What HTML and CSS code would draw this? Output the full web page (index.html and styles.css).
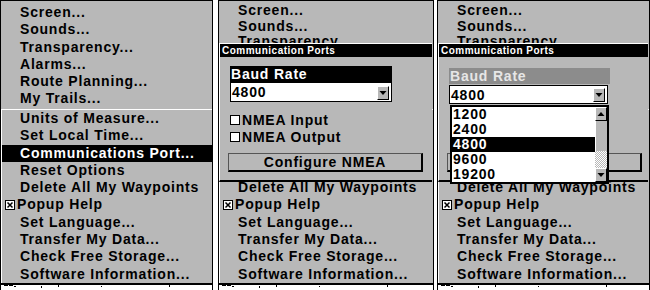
FILE: index.html
```html
<!DOCTYPE html>
<html lang="en">
<head>
    <meta charset="UTF-8">
    <meta name="viewport" content="width=device-width, initial-scale=1.0">
    <title>Communication Ports</title>
    <link rel="stylesheet" href="styles.css">
</head>
<body>
    <div class="screens">
        <!-- Screen 1: system menu, Communications Port selected -->
        <div class="screen screen-first">
            <div class="lcd">
                <ul class="menu menu-main">
                    <li>Screen...</li>
                    <li>Sounds...</li>
                    <li>Transparency...</li>
                    <li>Alarms...</li>
                    <li>Route Planning...</li>
                    <li>My Trails...</li>
                </ul>
                <ul class="menu menu-sub">
                    <li>Units of Measure...</li>
                    <li>Set Local Time...</li>
                    <li class="selected">Communications Port...</li>
                    <li>Reset Options</li>
                    <li>Delete All My Waypoints</li>
                    <li class="checkable"><svg class="check" width="10" height="10" viewBox="0 0 10 10"><rect x="0.5" y="0.5" width="9" height="9" fill="#fff" stroke="#000"/><path d="M2.5 2.5 L7.5 7.5 M7.5 2.5 L2.5 7.5" stroke="#000" stroke-width="1.5"/></svg>Popup Help</li>
                    <li>Set Language...</li>
                    <li>Transfer My Data...</li>
                    <li>Check Free Storage...</li>
                    <li>Software Information...</li>
                </ul>
            </div>
            <div class="map-strip">
                <svg width="100%" height="5"><g fill="#000"><rect x="3" y="0" width="4" height="1"/><rect x="8" y="0" width="4" height="1"/><rect x="13" y="1" width="2" height="1"/><rect x="40" y="1" width="1" height="2"/><rect x="57" y="0" width="1" height="2"/><rect x="100" y="1" width="1" height="1"/><rect x="168" y="0" width="1" height="2"/></g></svg>
            </div>
        </div>

        <!-- Screen 2: Communication Ports dialog -->
        <div class="screen screen-second screen-dialog">
            <div class="lcd">
                <ul class="menu menu-main">
                    <li>Screen...</li>
                    <li>Sounds...</li>
                    <li>Transparency...</li>
                </ul>
                <ul class="menu menu-sub">
                    <li class="covered">Units of Measure...</li>
                    <li class="covered">Set Local Time...</li>
                    <li class="covered">Communications Port...</li>
                    <li class="covered">Reset Options</li>
                    <li>Delete All My Waypoints</li>
                    <li class="checkable"><svg class="check" width="10" height="10" viewBox="0 0 10 10"><rect x="0.5" y="0.5" width="9" height="9" fill="#fff" stroke="#000"/><path d="M2.5 2.5 L7.5 7.5 M7.5 2.5 L2.5 7.5" stroke="#000" stroke-width="1.5"/></svg>Popup Help</li>
                    <li>Set Language...</li>
                    <li>Transfer My Data...</li>
                    <li>Check Free Storage...</li>
                    <li>Software Information...</li>
                </ul>

                <div class="dialog">
                    <div class="dialog-title">Communication Ports</div>
                    <div class="dialog-body">
                        <div class="field-label">Baud Rate</div>
                        <div class="select">
                            <span class="select-value">4800</span>
                            <span class="arrow-btn"><svg width="10" height="11" viewBox="0 0 10 11"><polygon points="1.5,4 8.5,4 5,8" fill="#000"/></svg></span>
                        </div>
                        <div class="options">
                            <div class="option"><span class="box"></span>NMEA Input</div>
                            <div class="option"><span class="box"></span>NMEA Output</div>
                        </div>
                        <button class="action" type="button"><span class="action-label">Configure NMEA</span></button>
                    </div>
                </div>
            </div>
            <div class="map-strip">
                <svg width="100%" height="5"><g fill="#000"><rect x="3" y="0" width="4" height="1"/><rect x="8" y="0" width="4" height="1"/><rect x="13" y="1" width="2" height="1"/><rect x="40" y="1" width="1" height="2"/><rect x="57" y="0" width="1" height="2"/><rect x="100" y="1" width="1" height="1"/><rect x="168" y="0" width="1" height="2"/></g></svg>
            </div>
        </div>

        <!-- Screen 3: Baud Rate list opened -->
        <div class="screen screen-third screen-dialog">
            <div class="lcd">
                <ul class="menu menu-main">
                    <li>Screen...</li>
                    <li>Sounds...</li>
                    <li>Transparency...</li>
                </ul>
                <ul class="menu menu-sub">
                    <li class="covered">Units of Measure...</li>
                    <li class="covered">Set Local Time...</li>
                    <li class="covered">Communications Port...</li>
                    <li class="covered">Reset Options</li>
                    <li>Delete All My Waypoints</li>
                    <li class="checkable"><svg class="check" width="10" height="10" viewBox="0 0 10 10"><rect x="0.5" y="0.5" width="9" height="9" fill="#fff" stroke="#000"/><path d="M2.5 2.5 L7.5 7.5 M7.5 2.5 L2.5 7.5" stroke="#000" stroke-width="1.5"/></svg>Popup Help</li>
                    <li>Set Language...</li>
                    <li>Transfer My Data...</li>
                    <li>Check Free Storage...</li>
                    <li>Software Information...</li>
                </ul>

                <div class="dialog">
                    <div class="dialog-title">Communication Ports</div>
                    <div class="dialog-body">
                        <div class="field-label field-label-open">Baud Rate</div>
                        <div class="select select-open">
                            <span class="select-value">4800</span>
                            <span class="arrow-btn"><svg width="10" height="11" viewBox="0 0 10 11"><polygon points="1.5,4 8.5,4 5,8" fill="#000"/></svg></span>
                            <div class="select-list">
                                <ul class="list-items">
                                    <li>1200</li>
                                    <li>2400</li>
                                    <li class="selected">4800</li>
                                    <li>9600</li>
                                    <li>19200</li>
                                </ul>
                                <div class="scrollbar">
                                    <span class="scroll-btn"><svg width="10" height="12" viewBox="0 0 10 12"><polygon points="1.5,8 8.5,8 5,4" fill="#000"/></svg></span>
                                    <span class="scroll-thumb"></span>
                                    <span class="scroll-track"></span>
                                    <span class="scroll-btn"><svg width="10" height="12" viewBox="0 0 10 12"><polygon points="1.5,4 8.5,4 5,8" fill="#000"/></svg></span>
                                </div>
                            </div>
                        </div>
                        <div class="options options-open covered">
                            <div class="option"><span class="box"></span>NMEA Input</div>
                            <div class="option"><span class="box"></span>NMEA Output</div>
                        </div>
                        <button class="action" type="button"><span class="action-label covered">Configure NMEA</span></button>
                    </div>
                </div>
            </div>
            <div class="map-strip">
                <svg width="100%" height="5"><g fill="#000"><rect x="3" y="0" width="4" height="1"/><rect x="8" y="0" width="4" height="1"/><rect x="13" y="1" width="2" height="1"/><rect x="40" y="1" width="1" height="2"/><rect x="57" y="0" width="1" height="2"/><rect x="100" y="1" width="1" height="1"/><rect x="168" y="0" width="1" height="2"/></g></svg>
            </div>
        </div>
    </div>
</body>
</html>
```

FILE: styles.css
```css
/* General */
body {
    margin: 0;
    background: #fff;
    font-family: "Liberation Sans", Arial, sans-serif;
    font-size: 14px;
    font-weight: bold;
    color: #000;
}

.screens {
    display: flex;
    width: 650px;
    height: 290px;
}

/* One unit screen */
.screen {
    display: flex;
    flex-direction: column;
    border: 1px solid #000;
    border-bottom: none;
}

.screen-first {
    width: 211px;
    margin-right: 5px;
}

.screen-second {
    width: 214px;
    margin-right: 3px;
}

.screen-third {
    width: 211px;
}

.lcd {
    position: relative;
    height: 282px;
    background: #b8b8b8;
    border-bottom: 2px solid #000;
    overflow: hidden;
}

.map-strip {
    height: 5px;
    background: #fff;
}

.map-strip svg {
    display: block;
}

/* hidden under the dialog / open list */
.covered {
    visibility: hidden;
}

/* Menus */
.menu {
    list-style: none;
    margin: 0;
    padding: 0;
    letter-spacing: 0.8px;
}

.menu li {
    height: 17.3px;
    line-height: 17.3px;
    white-space: nowrap;
}

.menu-main {
    height: 105px;
    padding: 3px 0 0 19px;
    overflow: hidden;
}

/* upper menu is cut off by the dialog's top edge */
.screen-dialog .menu-main {
    height: 40px;
    padding-top: 2px;
    margin-bottom: 66px;
}

.screen-dialog .menu-main li {
    height: 15.7px;
    line-height: 15.7px;
}

.menu-sub {
    border-top: 1px solid #fff;
    border-left: 1px solid #fff;
}

.menu-sub li {
    padding-left: 18px;
}

.menu-sub li.selected {
    background: #000;
    color: #fff;
}

.menu-sub li.checkable {
    display: flex;
    align-items: center;
    gap: 2px;
    padding-left: 3px;
}

.check {
    display: block;
    flex-shrink: 0;
}

/* Dialog */
.dialog {
    position: absolute;
    top: 42px;
    left: 0;
    right: 1px;
    background: #b8b8b8;
    border-top: 1px solid #fff;
    border-left: 1px solid #fff;
    border-bottom: 2px solid #000;
}

.dialog-title {
    height: 13px;
    line-height: 13px;
    padding-left: 2px;
    background: #000;
    color: #fff;
    font-size: 10px;
    letter-spacing: 0.5px;
}

.dialog-body {
    padding: 9px 0 8px 10px;
}

.field-label {
    width: 162px;
    height: 16px;
    line-height: 16px;
    padding-left: 1px;
    box-sizing: border-box;
    background: #000;
    color: #fff;
    letter-spacing: 0.8px;
}

.field-label-open {
    width: 161px;
    margin-top: 2px;
    background: #8c8c8c;
    color: #e6e6e6;
}

.select {
    position: relative;
    display: flex;
    justify-content: space-between;
    align-items: flex-end;
    width: 162px;
    height: 20px;
    box-sizing: border-box;
    border: 1px solid #000;
    background: #fff;
    letter-spacing: 0.8px;
}

.select-open {
    width: 159px;
    height: 19px;
    margin-top: 1px;
}

.select-value {
    align-self: center;
    padding-left: 1px;
}

.arrow-btn {
    display: flex;
    justify-content: center;
    width: 12px;
    height: 14px;
    margin: 0 2px 1px 0;
    box-sizing: border-box;
    background: #b8b8b8;
    border-top: 1px solid #fff;
    border-left: 1px solid #fff;
    border-right: 1px solid #000;
    border-bottom: 1px solid #000;
}

.arrow-btn svg {
    display: block;
}

/* Open list */
.select-list {
    position: absolute;
    top: 19px;
    left: 0;
    z-index: 2;
    width: 159px;
    box-sizing: border-box;
    padding-right: 12px;
    border: 2px solid #000;
    background: #fff;
}

.list-items {
    list-style: none;
    margin: 0;
    padding: 0;
}

.list-items li {
    height: 15px;
    line-height: 15px;
    padding-left: 1px;
}

.list-items li.selected {
    background: #000;
    color: #fff;
}

.scrollbar {
    position: absolute;
    top: 0;
    right: 0;
    bottom: 0;
    width: 12px;
    display: flex;
    flex-direction: column;
}

.scroll-btn {
    display: flex;
    justify-content: center;
    height: 14px;
    box-sizing: border-box;
    background: #b8b8b8;
    border-top: 1px solid #fff;
    border-left: 1px solid #fff;
    border-right: 1px solid #000;
    border-bottom: 1px solid #000;
}

.scroll-thumb {
    height: 30px;
    background: #b8b8b8;
    border-left: 1px solid #fff;
}

.scroll-track {
    flex: 1;
    background: repeating-conic-gradient(#b8b8b8 0 25%, #fff 0 50%) 0 0 / 2px 2px;
}

/* Checkboxes */
.options {
    margin-top: 9px;
}

.options-open {
    margin-top: 7px;
}

.option {
    display: flex;
    align-items: center;
    gap: 2px;
    height: 17px;
    letter-spacing: 0.8px;
}

.box {
    width: 10px;
    height: 10px;
    box-sizing: border-box;
    border: 1px solid #000;
    background: #fff;
}

/* Button */
.action {
    display: block;
    width: 195px;
    height: 19px;
    margin: 8px 0 0 -2px;
    padding: 0;
    box-sizing: border-box;
    border: 1px solid #555;
    border-right: 2px solid #000;
    border-bottom: 2px solid #000;
    background: #b8b8b8;
    font: inherit;
    letter-spacing: 0.8px;
    color: #000;
    line-height: 16px;
    text-align: center;
}
```
